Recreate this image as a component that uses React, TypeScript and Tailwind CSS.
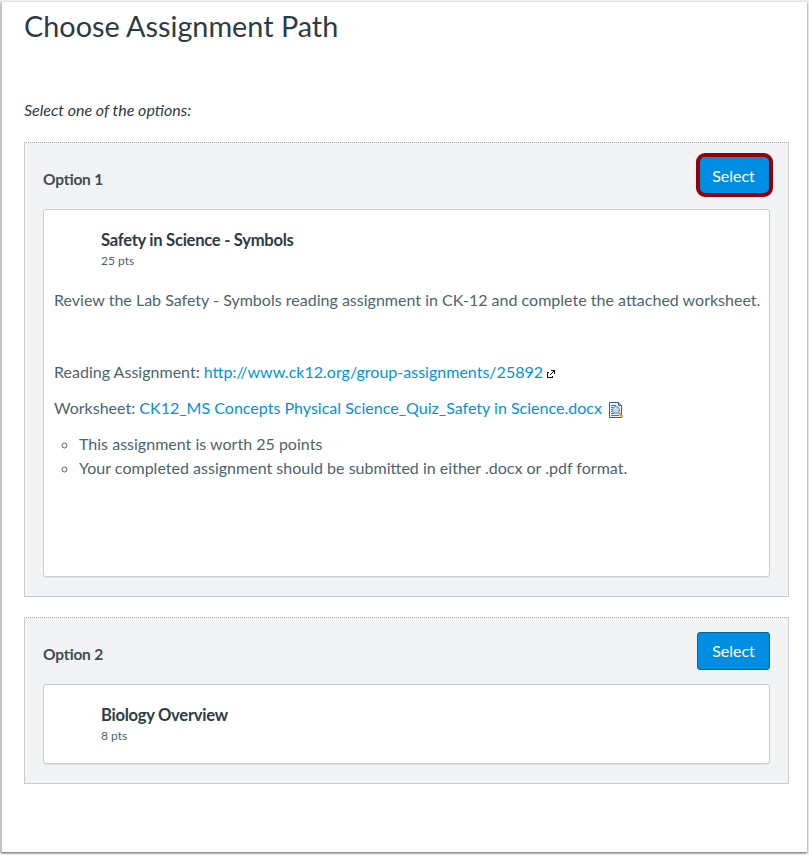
import type { ReactNode } from 'react';

const App = () => {
  return (
    <div className="h-[855px] w-[809px] bg-[#f0f0f0] pt-[2px] pr-[2px] pb-[3px] pl-px font-[Lato,sans-serif] text-base leading-6 text-[#4c6472] antialiased [font-feature-settings:'liga'_1]">
      <main className="flex h-[850px] flex-col border-l border-[#c4c4c4] bg-white px-[22px] pr-[18px] shadow-[0_1px_2px_rgba(0,0,0,0.6)]">
        <h1 className="mt-[3px] text-[28.8px] leading-[43px] text-[#2d3b45]">
          Choose Assignment Path
        </h1>

        <p className="mt-[50px] text-[#2d3b45] italic">Select one of the options:</p>

        <div className="mt-[20px] flex flex-col gap-5">
          <Option label="Option 1" isHighlighted={true}>
            <AssignmentCard title="Safety in Science - Symbols" points={25}>
              <div className="flex h-[305px] flex-col px-2.5 pt-[17px] tracking-[0.012px] whitespace-nowrap">
                <p>
                  Review the Lab Safety - Symbols reading assignment in CK-12 and complete the
                  attached worksheet.
                </p>

                <p className="mt-12 flex items-center">
                  Reading Assignment:&nbsp;
                  <a href="#" className="text-[#0092e4]">
                    http://www.ck12.org/group-assignments/25892
                  </a>
                  <ExternalLinkIcon />
                </p>

                <p className="mt-3 flex items-center">
                  Worksheet:&nbsp;
                  <a href="#" className="text-[#0092e4]">
                    CK12_MS Concepts Physical Science_Quiz_Safety in Science.docx
                  </a>
                  <PreviewIcon />
                </p>

                <ul className="mt-3 list-[circle] pl-[25px]">
                  <li>This assignment is worth 25 points</li>
                  <li>Your completed assignment should be submitted in either .docx or .pdf format.</li>
                </ul>
              </div>
            </AssignmentCard>
          </Option>

          <Option label="Option 2">
            <AssignmentCard title="Biology Overview" points={8}>
              <div className="h-[17px]" />
            </AssignmentCard>
          </Option>
        </div>
      </main>
    </div>
  );
};

interface OptionProps {
  label: string;
  children: ReactNode;
  isHighlighted?: boolean;
}

const Option = ({ label, children, isHighlighted = false }: OptionProps) => {
  return (
    <section className="border border-t-[#aaaaaa] border-[#c7cdd1] bg-[#f1f3f5] px-[18px] pb-[19px] [border-top-style:dotted]">
      <div className="flex h-[66px] items-start justify-between">
        <h2 className="pt-[24px] text-[15.5px] font-bold tracking-[-0.22px] text-[#444b51]">
          {label}
        </h2>

        {isHighlighted ? (
          <button className="mt-[10px] -mr-[3px] h-[44px] w-[77px] rounded-[9px] border-4 border-[#970006] bg-[#008ee2] pt-[2px] pr-[2px] text-white">
            Select
          </button>
        ) : (
          <button className="mt-[14px] h-[38px] w-[73px] rounded-[3px] border border-[#0066a2] bg-[#008ee2] text-white">
            Select
          </button>
        )}
      </div>

      {children}
    </section>
  );
};

interface AssignmentCardProps {
  title: string;
  points: number;
  children: ReactNode;
}

const AssignmentCard = ({ title, points, children }: AssignmentCardProps) => {
  return (
    <div className="rounded-[3px] border border-[#c7cdd1] bg-white shadow-[0_1px_0_#e3e6e8]">
      <div className="h-[61px] pt-[18px] pl-[57px] whitespace-nowrap">
        <h3 className="text-[16.6px] leading-6 font-bold tracking-[-0.28px] text-[#2d3b45]">
          {title}
        </h3>
        <p className="text-xs leading-[18px]">{points} pts</p>
      </div>

      {children}
    </div>
  );
};

const ExternalLinkIcon = () => (
  <svg
    width="10"
    height="10"
    viewBox="0 0 10 10"
    className="mt-1 ml-[3px]"
    fill="none"
    stroke="#111"
    shapeRendering="crispEdges"
  >
    <path d="M3 3.5H1.5V8.5H6.5V7M5 1.5H8.5V5" />
    <path d="M4 6L8 2" shapeRendering="auto" />
  </svg>
);

const PreviewIcon = () => (
  <svg width="16" height="16" viewBox="0 0 16 16" className="mt-1 ml-[6px]" fill="none">
    <path d="M1.5.5h9l3 3v12h-12z" fill="#f4f8fc" stroke="#365f83" />
    <path d="M10.5.5v3h3" fill="#a9c4dc" stroke="#365f83" />
    <path d="M3 3.5h5M3 5.5h2M3 7.5h1M3 9.5h1M3 11.5h3M3 13.5h8" stroke="#3f6fa3" />
    <circle cx="8" cy="8" r="3.5" fill="#b6dcf5" stroke="#6589ac" />
    <path d="M6.5 7.5c0-1 .7-1.5 1.5-1.5" stroke="#fff" />
    <path d="M10.8 11l3.7 3.7" stroke="#e29424" strokeWidth="2" />
  </svg>
);

export default App;
